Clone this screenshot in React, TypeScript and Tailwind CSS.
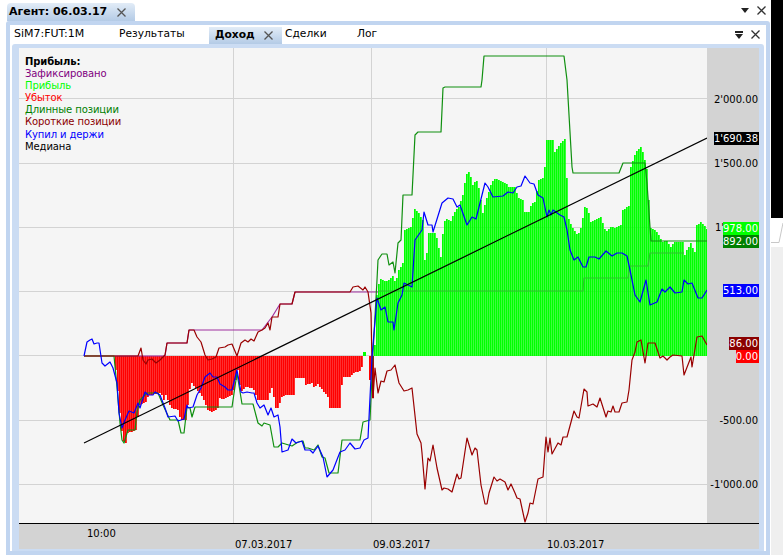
import React from 'react';

type Pt = [number, number];

// x,y in page pixels, read off the picture
const greenTops: Pt[] = [[374,345],[375,300],[379,279],[385,281],[388,280],[392,276],[395,283],[397,272],[402,263],[403,230],[410,227],[414,209],[418,213],[422,220],[424,260],[427,250],[428,233],[435,233],[437,243],[440,257],[443,223],[445,219],[450,221],[453,213],[458,207],[462,195],[464,183],[467,170],[469,173],[472,185],[475,180],[477,182],[479,193],[482,213],[484,205],[487,195],[491,182],[495,178],[500,181],[505,183],[508,187],[515,187],[517,198],[522,200],[524,212],[528,212],[531,203],[535,202],[537,180],[542,178],[544,167],[546,140],[552,140],[553,153],[557,147],[560,143],[565,138],[567,217],[573,230],[577,235],[580,228],[584,207],[587,208],[590,222],[595,220],[600,217],[605,232],[610,227],[615,228],[620,225],[622,210],[628,206],[630,167],[635,152],[640,147],[643,155],[647,173],[648,200],[650,228],[655,230],[658,235],[662,242],[665,240],[670,247],[673,242],[682,242],[683,258],[686,250],[690,243],[694,252],[696,225],[700,222],[703,225],[707,230]];

const redBottoms: Pt[] = [[115,370],[116,380],[119,413],[122,440],[125,443],[127,433],[135,430],[137,417],[139,405],[145,402],[148,395],[160,393],[163,400],[166,392],[167,400],[170,408],[177,410],[180,420],[185,420],[187,405],[188,395],[190,382],[195,388],[198,392],[202,397],[207,410],[212,412],[217,408],[218,398],[223,399],[232,395],[237,370],[240,392],[245,387],[252,388],[257,400],[267,400],[268,395],[272,385],[274,408],[278,408],[280,398],[285,395],[293,395],[295,378],[303,378],[305,385],[312,383],[314,390],[316,382],[320,388],[327,397],[329,408],[340,408],[341,385],[342,377],[350,377],[352,373],[360,371],[362,362]];

const purple = '84,356 165,356 167,343 187,343 189,330 262,330 272,317 280,304 292,304 295,292 378,292';
const fixedInGreen = '378,291 583,291 584,278 628,278 630,266 648,266 650,253 684,253';

const greenLine = '84,356 114,356 117,387 120,423 122,440 124,443 128,430 135,430 137,412 140,400 147,393 158,393 163,405 170,420 178,420 181,433 184,433 187,407 190,408 192,417 195,407 232,407 237,373 242,404 253,404 258,423 262,426 264,423 270,425 274,447 278,447 282,443 292,446 298,442 303,441 305,448 308,448 314,450 318,445 322,457 325,458 329,473 338,473 342,440 360,440 363,422 370,420 373,353 377,280 378,260 382,254 387,254 389,265 393,262 395,273 398,243 401,240 403,195 412,195 415,135 418,132 441,132 443,88 445,87 481,87 482,80 484,56 564,56 567,80 572,167 573,173 619,173 623,163 645,163 647,183 650,227 651,241 707,241';

const darkRedLine = '84,356 138,356 141,348 143,360 146,364 148,360 152,359 156,363 160,360 165,355 167,343 187,343 189,330 194,330 197,337 201,342 205,355 208,360 212,359 216,357 219,348 225,347 228,345 232,344 237,356 241,343 245,340 248,342 251,339 254,341 258,332 262,330 265,328 268,323 270,330 272,317 278,317 280,304 292,304 295,292 350,292 353,287 358,286 363,290 365,287 368,292 371,313 372,363 373,398 375,368 378,393 381,381 384,382 387,371 391,370 395,365 399,383 404,391 408,390 412,388 417,434 421,443 422,453 425,489 428,458 430,461 433,445 437,468 442,490 444,488 448,489 452,492 457,474 459,479 461,478 467,438 472,455 475,448 477,450 481,485 485,504 487,504 489,493 494,477 497,481 500,479 505,482 508,490 511,484 515,493 517,498 520,499 525,522 528,513 530,503 533,504 538,479 543,477 546,437 548,452 550,438 552,454 558,443 561,445 563,437 567,437 574,411 577,417 579,418 584,389 587,392 588,406 593,404 597,407 600,398 606,417 608,411 611,412 613,406 615,412 619,412 622,403 627,402 629,390 632,360 635,352 637,342 641,340 645,363 648,343 655,343 660,358 663,356 667,360 670,357 673,355 682,356 684,375 691,357 692,367 697,337 702,336 707,345';

const blueLine = '84,356 87,342 90,340 92,339 94,344 97,343 99,343 102,363 105,366 110,362 113,368 117,383 119,413 122,428 125,420 129,411 134,413 138,403 140,408 145,392 148,395 153,395 155,392 160,395 165,408 168,417 175,416 178,421 184,419 187,405 188,408 193,407 197,395 201,388 205,377 210,373 213,377 217,377 220,384 225,387 228,390 232,390 237,370 241,392 243,393 247,392 252,393 254,393 257,403 260,408 264,405 268,415 271,408 274,417 278,415 280,427 282,452 288,450 292,439 296,443 302,441 305,450 310,450 313,453 318,446 323,457 327,477 333,470 340,452 345,450 350,443 355,449 360,448 364,440 368,438 372,357 377,298 381,310 385,307 388,322 393,322 394,330 398,303 402,295 404,283 412,287 415,240 422,230 424,212 428,225 432,225 433,232 442,203 448,198 453,199 457,207 460,205 467,225 472,217 476,219 485,183 488,187 493,197 503,196 508,192 513,193 517,187 521,186 525,176 530,183 534,184 538,195 543,198 547,217 549,210 551,215 553,210 560,215 564,217 567,230 570,250 574,260 578,257 583,267 586,267 589,257 595,257 599,259 606,251 612,256 617,253 622,253 627,256 630,270 635,295 640,302 646,280 650,305 657,302 662,289 665,292 670,287 675,293 682,292 684,280 688,284 692,283 698,298 702,298 707,290';

const lerp = (pts: Pt[], x: number) => {
  for (let i = 1; i < pts.length; i++) {
    if (x <= pts[i][0]) {
      const [x0, y0] = pts[i - 1];
      const [x1, y1] = pts[i];
      return y0 + ((y1 - y0) * (x - x0)) / (x1 - x0 || 1);
    }
  }
  return pts[pts.length - 1][1];
};

const barXs = (from: number, to: number) => {
  const xs: number[] = [];
  for (let x = from; x < to; x += 2) xs.push(x);
  return xs;
};

const legend = [
  { label: 'Прибыль:', className: 'font-bold text-black' },
  { label: 'Зафиксировано', className: 'text-[#800080]' },
  { label: 'Прибыль', className: 'text-[#00ff00]' },
  { label: 'Убыток', className: 'text-[#ff0000]' },
  { label: 'Длинные позиции', className: 'text-[#008000]' },
  { label: 'Короткие позиции', className: 'text-[#8b0000]' },
  { label: 'Купил и держи', className: 'text-[#0000ff]' },
  { label: 'Медиана', className: 'text-black' },
];

function CloseMark({ size = 9, color = '#555555' }: { size?: number; color?: string }) {
  return (
    <svg width={size} height={size} viewBox="0 0 9 9" className="block shrink-0">
      <path d="M0.5 0.5L8.5 8.5M8.5 0.5L0.5 8.5" fill="none" stroke={color} strokeWidth={1.3} />
    </svg>
  );
}

function Chart() {
  return (
    <svg width={688} height={475} viewBox="19 48 688 475" className="block">
      <g stroke="#d3d3d3" strokeWidth={1}>
        {[98, 163, 227, 291, 355, 420, 484].map((y) => (
          <line key={y} x1={19} x2={707} y1={y + 0.5} y2={y + 0.5} />
        ))}
        {[233, 371, 546].map((x) => (
          <line key={x} x1={x + 0.5} x2={x + 0.5} y1={48} y2={523} />
        ))}
      </g>
      <g fill="#ff0000">
        {barXs(115, 363).map((x) => {
          const y = Math.round(lerp(redBottoms, x));
          return <rect key={x} x={x} y={356} width={1.8} height={y - 356} />;
        })}
        <rect x={369} y={356} width={2} height={24} />
        <rect x={372} y={356} width={2} height={42} fill="#c00000" />
      </g>
      <g fill="#00ff00">
        <rect x={363} y={352} width={3} height={4} />
        {barXs(374, 707).map((x) => {
          const y = Math.round(lerp(greenTops, x));
          return <rect key={x} x={x} y={y} width={1.75} height={356 - y} />;
        })}
      </g>
      <g fill="none" strokeWidth={1.2} strokeLinejoin="round">
        <polyline points={purple} stroke="#a030a0" />
        <polyline points={fixedInGreen} stroke="#30c030" />
        <polyline points={greenLine} stroke="#109010" />
        <polyline points={darkRedLine} stroke="#990000" />
        <polyline points={blueLine} stroke="#0000ff" />
        <line x1={84} y1={443} x2={707} y2={138} stroke="#000000" />
      </g>
    </svg>
  );
}

function AxisLabel({ top, text, className }: { top: number; text: string; className: string }) {
  return (
    <div
      className={`absolute right-0 h-[13px] pr-px text-right leading-[13px] ${className}`}
      style={{ top: top - 48 }}
    >
      {text}
    </div>
  );
}

export default function App() {
  return (
    <div className="flex h-[555px] w-[783px] overflow-hidden bg-white font-['DejaVu_Sans',sans-serif] text-[10.7px] text-black">
      <div className="flex w-[771px] flex-col">
        {/* window title row */}
        <div className="flex h-[21px] items-end pl-[7px] pr-[5px]">
          <div className="flex h-[18px] w-[128px] items-center rounded-t-sm bg-gradient-to-b from-[#e2ecf7] to-[#b4cbe6] pl-[2px] text-[11px] font-bold">
            <span>Агент: 06.03.17</span>
            <div className="ml-[10px]">
              <CloseMark />
            </div>
          </div>
          <div className="mb-[6px] ml-auto flex items-center gap-[8px]">
            <div className="h-0 w-0 border-x-4 border-t-[5px] border-x-transparent border-t-[#222222]" />
            <CloseMark color="#333333" />
          </div>
        </div>

        {/* outer frame */}
        <div className="ml-[6px] mr-px flex min-h-0 flex-1 flex-col rounded-t-[3px] border-4 border-[#c1d5f0] bg-white">
          <div className="flex h-[19px] items-center">
            <span className="ml-[4px] w-[105px] text-[11px]">SiM7:FUT:1M</span>
            <span className="w-[90px]">Результаты</span>
            <div className="flex h-[17px] w-[73px] items-center self-end bg-gradient-to-b from-[#e2ecf7] to-[#b4cbe6] pl-[6px] font-bold">
              <span>Доход</span>
              <div className="ml-[9px]">
                <CloseMark />
              </div>
            </div>
            <span className="ml-[3px] w-[72px]">Сделки</span>
            <span>Лог</span>
            <div className="ml-auto flex items-center gap-[8px] pr-[6px]">
              <div className="flex flex-col items-center gap-px">
                <div className="h-[2px] w-[8px] bg-[#222222]" />
                <div className="h-0 w-0 border-x-4 border-t-[5px] border-x-transparent border-t-[#222222]" />
              </div>
              <CloseMark color="#333333" />
            </div>
          </div>

          {/* inner frame */}
          <div className="ml-[2px] mr-[2px] flex min-h-0 flex-1 flex-col rounded-t-[3px] border-b-2 border-l-[7px] border-r-[5px] border-t-4 border-[#cbdcf3] bg-[#f5f5f5]">
            <div className="flex h-[475px]">
              <div className="relative w-[688px]">
                <Chart />
                <div className="absolute left-[6px] top-[8px] text-[10px] leading-[12.1px] tracking-[-0.1px]">
                  {legend.map((item, i) => (
                    <div key={i} className={item.className}>
                      {item.label}
                    </div>
                  ))}
                </div>
              </div>
              <div className="relative flex-1 bg-[#d3d3d3] text-[10px]">
                <AxisLabel top={93} text="2'000.00" className="" />
                <AxisLabel top={132} text="1'690.38" className="bg-black text-white" />
                <AxisLabel top={157} text="1'500.00" className="" />
                {/* the rest of 1'000.00 sits behind the 978.00 tag */}
                <div className="absolute left-[8px] top-[173px] h-[13px] leading-[13px]">1'</div>
                <AxisLabel top={222} text="978.00" className="bg-[#00ff00] text-white" />
                <AxisLabel top={235} text="892.00" className="bg-[#008000] text-white" />
                <AxisLabel top={284} text="513.00" className="bg-[#0000ff] text-white" />
                <AxisLabel top={337} text="86.00" className="bg-[#8b0000] text-white" />
                <AxisLabel top={350} text="0.00" className="bg-[#ff0000] text-white" />
                <AxisLabel top={414} text="-500.00" className="" />
                <AxisLabel top={478} text="-1'000.00" className="" />
              </div>
            </div>
            {/* time axis */}
            <div className="relative flex-1 border-t border-black bg-[#d3d3d3] text-[10px]">
              <span className="absolute left-[68px] top-[2px]">10:00</span>
              <span className="absolute left-[216px] top-[13px]">07.03.2017</span>
              <span className="absolute left-[354px] top-[13px]">09.03.2017</span>
              <span className="absolute left-[528px] top-[13px]">10.03.2017</span>
            </div>
          </div>
        </div>
      </div>

      {/* sliver of the next window */}
      <div className="flex w-[12px] flex-col">
        <div className="h-[218px] bg-black" />
        <div className="h-[29px] bg-white">
          <svg width={12} height={29} className="block">
            <polyline points="0,24.5 8,24.5 12,5" fill="none" stroke="#c8c8c8" />
          </svg>
        </div>
        <div className="flex-1 bg-[#efefef]" />
      </div>
    </div>
  );
}
